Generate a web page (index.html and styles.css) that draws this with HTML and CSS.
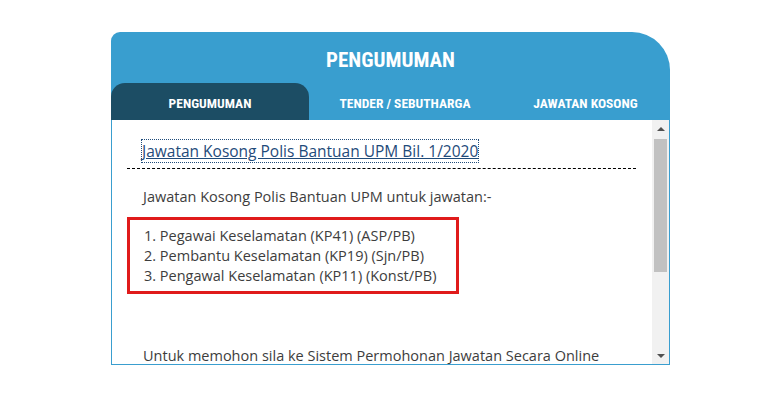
FILE: index.html
```html
<!DOCTYPE html>
<html>
<head>
<meta charset="utf-8">
<link rel="stylesheet" href="styles.css">
</head>
<body>
<div class="widget">
  <div class="head">
    <div class="title">PENGUMUMAN</div>
    <div class="tabs">
      <div class="tab active">PENGUMUMAN</div>
      <div class="tab">TENDER / SEBUTHARGA</div>
      <div class="tab">JAWATAN KOSONG</div>
    </div>
  </div>
  <div class="body">
    <div class="content">
      <div class="item-title"><a class="link" href="#">Jawatan Kosong Polis Bantuan UPM Bil. 1/2020</a></div>
      <div class="rule"></div>
      <p class="para">Jawatan Kosong Polis Bantuan UPM untuk jawatan:-</p>
      <div class="boxed">
        <div>1. Pegawai Keselamatan (KP41) (ASP/PB)</div>
        <div>2. Pembantu Keselamatan (KP19) (Sjn/PB)</div>
        <div>3. Pengawal Keselamatan (KP11) (Konst/PB)</div>
      </div>
      <p class="para gap">Untuk memohon sila ke Sistem Permohonan Jawatan Secara Online</p>
    </div>
    <div class="scrollbar">
      <div class="arrow up"></div>
      <div class="track"><div class="thumb"></div></div>
      <div class="arrow down"></div>
    </div>
  </div>
</div>
</body>
</html>
```

FILE: styles.css
```css
html, body {
  margin: 0;
  padding: 0;
  background: #ffffff;
}
body {
  padding: 32px 0 0 111px;
  font-family: "Open Sans", "Liberation Sans", sans-serif;
}
.widget {
  width: 559px;
}
.head {
  background: #399ecf;
  border-radius: 9px 38px 0 0;
  height: 88px;
  display: flex;
  flex-direction: column;
}
.title {
  height: 51px;
  display: flex;
  align-items: center;
  justify-content: center;
  color: #ffffff;
  font-family: "Liberation Sans Narrow", "Roboto", sans-serif;
  font-stretch: condensed;
  font-weight: 700;
  font-size: 21px;
  padding-top: 4px;
  box-sizing: border-box;
}
.tabs {
  display: grid;
  grid-template-columns: 198px 192px 1fr;
  height: 37px;
}
.tab {
  display: flex;
  align-items: center;
  justify-content: center;
  color: #ffffff;
  font-family: "Liberation Sans Narrow", "Roboto", sans-serif;
  font-stretch: condensed;
  font-weight: 700;
  font-size: 13.5px;
  padding-top: 2px;
  box-sizing: border-box;
}
.tab.active {
  background: #1c4d64;
  border-radius: 14px 14px 0 0;
}
.body {
  border: 1px solid #3a9ecf;
  border-top: none;
  height: 245px;
  box-sizing: border-box;
  display: flex;
}
.content {
  flex: 1;
  min-width: 0;
  overflow: hidden;
  padding: 21px 16px 0 15px;
  color: #3d3d3d;
  font-size: 14.5px;
  line-height: 20px;
}
.item-title {
  padding-left: 15px;
  font-size: 15.5px;
}
.link {
  color: #1f4b7a;
  text-decoration: underline;
  outline: 1px dotted #1f4b7a;
  outline-offset: 0;
}
.rule {
  border-top: 1px dashed #000000;
  margin-top: 7px;
}
.para {
  margin: 18px 0 0 0;
  padding-left: 16px;
  white-space: nowrap;
}
.boxed {
  margin-top: 10px;
  width: 332px;
  box-sizing: border-box;
  border: 3px solid #e01b1b;
  padding: 6px 0 5px 14px;
}
.gap {
  margin-top: 52px;
}
.scrollbar {
  width: 17px;
  flex: none;
  background: #f1f1f1;
  display: flex;
  flex-direction: column;
}
.arrow {
  height: 17px;
  display: flex;
  align-items: center;
  justify-content: center;
}
.arrow::before {
  content: "";
  width: 0;
  height: 0;
  border-left: 4px solid transparent;
  border-right: 4px solid transparent;
}
.arrow.up::before {
  border-bottom: 4px solid #505050;
}
.arrow.down::before {
  border-top: 4px solid #505050;
}
.track {
  flex: 1;
  padding: 2px 2px 0 2px;
}
.thumb {
  height: 133px;
  background: #c1c1c1;
}
```
